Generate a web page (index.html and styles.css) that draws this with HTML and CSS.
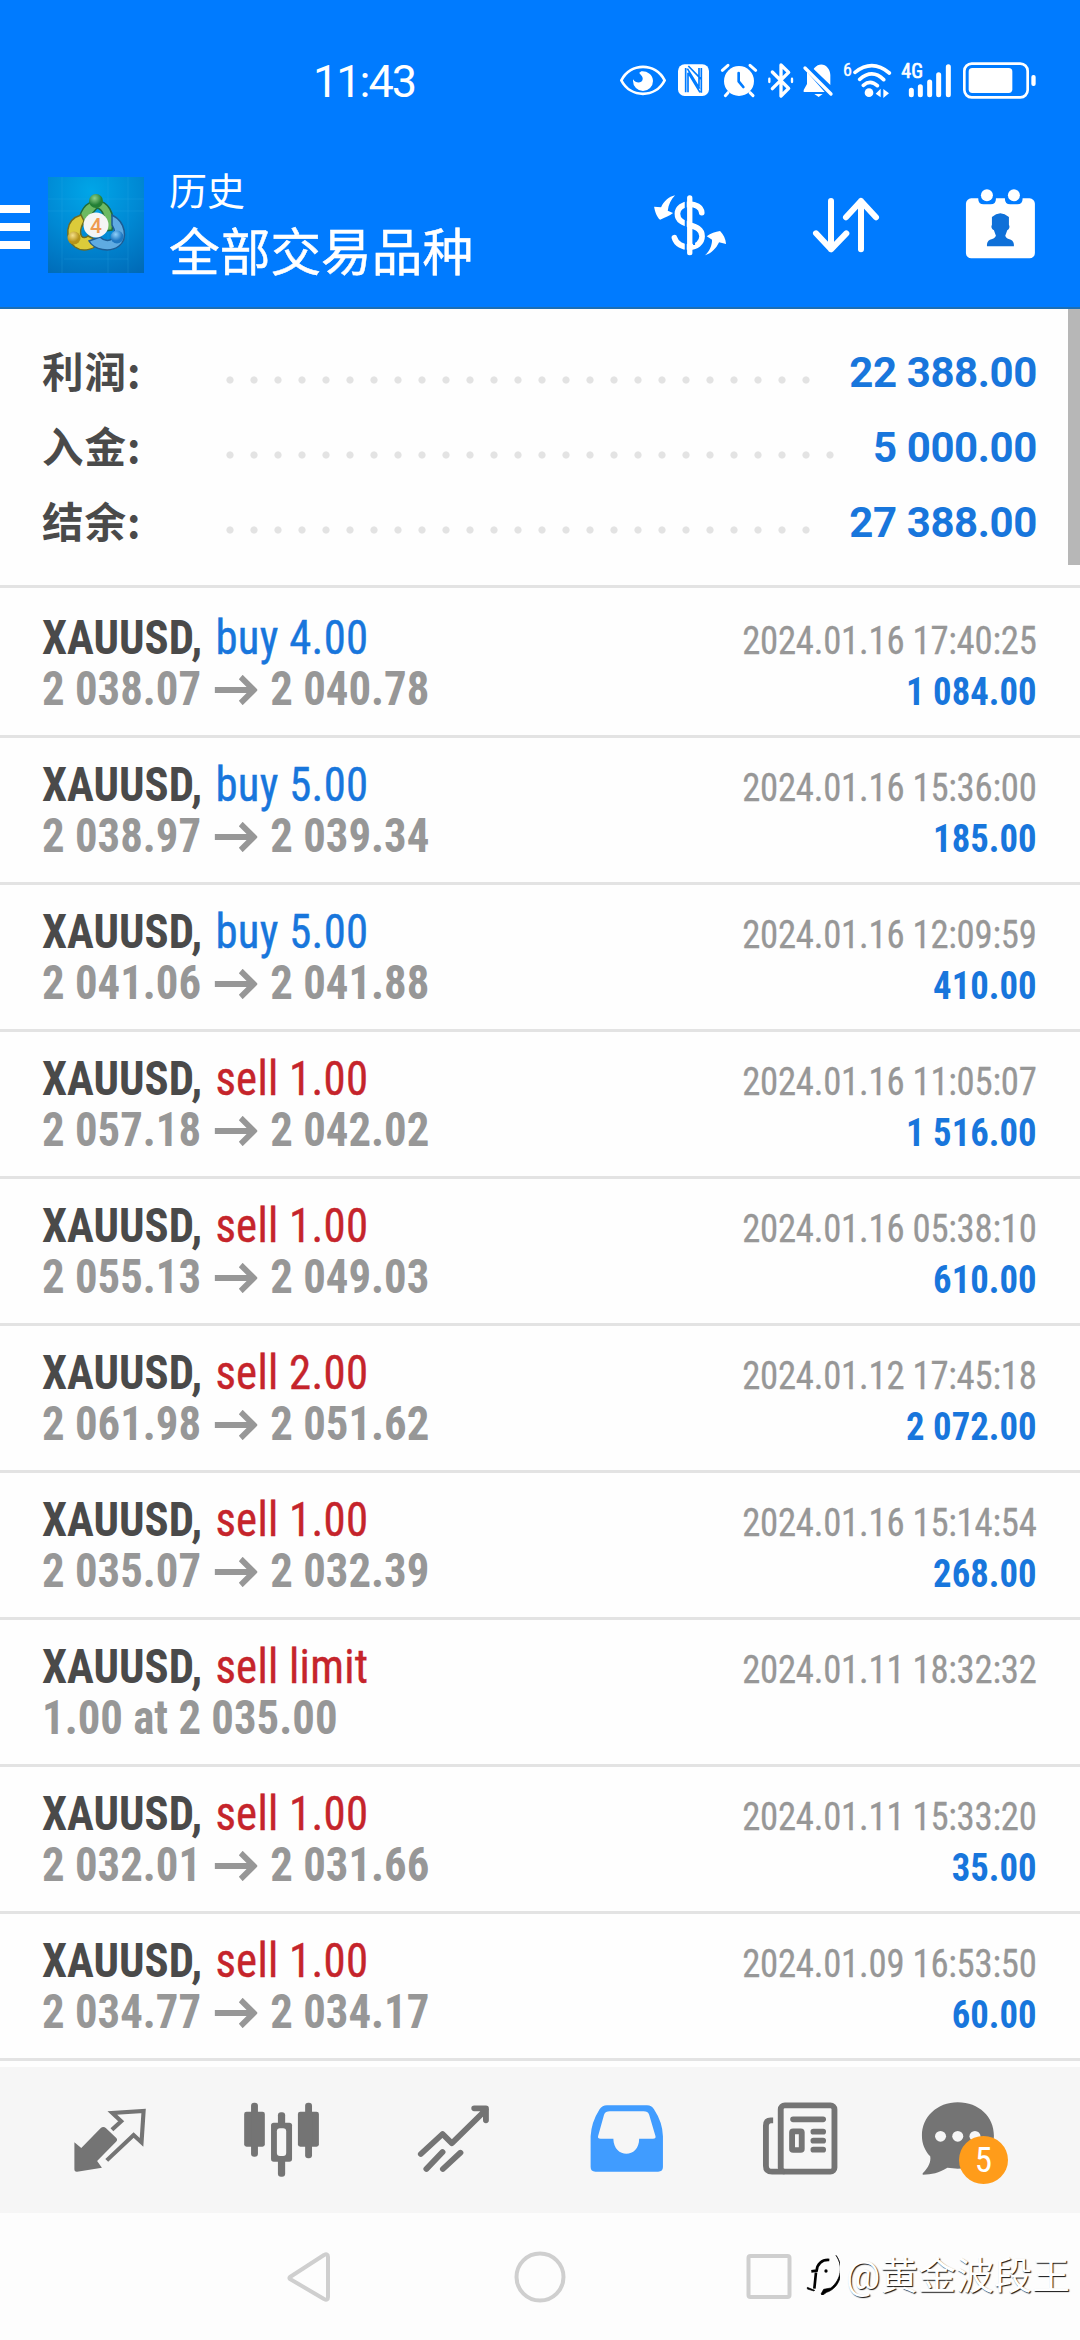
FILE: index.html
```
<!DOCTYPE html>
<html lang="zh-CN">
<head>
<meta charset="utf-8">
<title>历史</title>
<link rel="stylesheet" href="styles.css">
</head>
<body>
<header class="top">
  <div class="status">
    <div class="clock">11:43</div>
    <svg class="status-icons" viewBox="0 60 1440 120" fill="#fff" stroke="#fff" stroke-linecap="round" stroke-linejoin="round">
      <path d="M64 121C92 67 166 67 194 121C166 175 92 175 64 121Z" fill="none" stroke-width="8"/>
      <path d="M124 94C138 92 159 102 159 123A30 30 0 0 1 99 123L99 118C108 132 126 130 128 118C130 108 119 103 118 98Z" stroke="none"/>
      <rect x="234" y="73" width="93" height="95" rx="20" stroke="none"/>
      <path d="M257 84V157M264 98V157M262 86L299 146M265 78L304 118M304 84V158M297 84V140M264 98L300 157" fill="none" stroke="#007bff" stroke-width="5" stroke-linecap="butt"/>
      <circle cx="417" cy="123" r="45" stroke="none"/>
      <path d="M367 91L384 76M450 76L467 91M384 158L376 167M450 158L459 167" fill="none" stroke-width="9"/>
      <path d="M416 99V124L430 141" fill="none" stroke="#007bff" stroke-width="8"/>
      <path d="M517 96L566 145L543 168V75L566 97L517 146" fill="none" stroke-width="10"/>
      <path d="M508 116V126M576 116V126" stroke-width="7"/>
      <path d="M621 96V132L611 150V156H674ZM643 84C664 60 691 80 691 105V135L641 87ZM643 162H668L656 171Z" stroke="none"/>
      <path d="M615 84L693 162" stroke-width="10"/>
      <path d="M765 97Q817 56 868 99M779 118Q817 85 851 119M790 136Q811 118 832 137" fill="none" stroke-width="11"/>
      <circle cx="807" cy="158" r="13" stroke="none"/>
      <path d="M842 146V172L827 161ZM850 147V174L867 160Z" stroke="none"/>
      <text class="cond" x="729" y="108" font-size="54" stroke-width="1">6</text>
      <text class="cond" x="904" y="114" font-size="60" stroke-width="2">4G</text>
      <path d="M934 151V164M961 140V164M989 126V164M1016 104V164M1045 80V164" stroke-width="15"/>
      <rect x="1093" y="71" width="190" height="101" rx="22" fill="none" stroke-width="8"/>
      <rect x="1106" y="84" width="131" height="75" rx="11" stroke="none"/>
      <rect x="1294" y="105" width="13" height="33" rx="6" stroke="none"/>
    </svg>
  </div>
  <div class="bar">
    <div class="burger"><i></i><i></i><i></i></div>
    <svg class="logo" viewBox="0 0 96 96">
      <defs>
        <radialGradient id="sky" cx=".45" cy=".15" r="1"><stop offset="0" stop-color="#00a6e8"/><stop offset=".5" stop-color="#0089d4"/><stop offset="1" stop-color="#0069b6"/></radialGradient>
        <radialGradient id="gr" cx=".4" cy=".3"><stop offset="0" stop-color="#8fd08a"/><stop offset="1" stop-color="#237f35"/></radialGradient>
        <radialGradient id="ye" cx=".4" cy=".3"><stop offset="0" stop-color="#f5e08a"/><stop offset="1" stop-color="#b69318"/></radialGradient>
        <radialGradient id="bl" cx=".4" cy=".3"><stop offset="0" stop-color="#8fd0fa"/><stop offset="1" stop-color="#1f78c2"/></radialGradient>
      </defs>
      <rect width="96" height="96" fill="url(#sky)"/>
      <path d="M0 22H96M0 34H96M14 0V96M60 0V96M80 0V96M16 82H80" stroke="#32b2ea" stroke-opacity=".3" stroke-width=".7"/>
      <path d="M33 50C28 35 39 24 49 24S68 35 64 53L56 54C59 43 55 32 49 31Z" fill="#6dba62" stroke="#1f6b3a" stroke-width="1.5"/>
      <path d="M33 38C16 43 17 62 27 70C35 76 48 72 52 65L40 59C36 63 28 60 36 44Z" fill="#dccb3a" stroke="#6f6c22" stroke-width="1.5"/>
      <path d="M64 38C78 45 80 62 71 69C62 76 46 73 41 64L52 60C60 68 72 61 64 48Z" fill="#5fabe2" stroke="#1d5c94" stroke-width="1.5"/>
      <circle cx="48" cy="48" r="12.5" fill="#f5f5f5"/>
      <circle cx="48" cy="24" r="7" fill="url(#gr)"/>
      <circle cx="26" cy="61" r="6.5" fill="url(#ye)"/>
      <circle cx="69" cy="60" r="6.5" fill="url(#bl)"/>
      <text class="logo-num" x="48" y="55.5" text-anchor="middle">4</text>
    </svg>
    <div class="titles"><div class="sub">历史</div><div class="main">全部交易品种</div></div>
    <svg class="actions" viewBox="90 80 1170 220" fill="#fff" stroke="#fff" stroke-linecap="round" stroke-linejoin="round">
      <path d="M209 113V277" stroke-width="16"/>
      <path d="M245 157C243 123 172 122 172 160C172 204 246 184 246 228C246 269 174 272 163 232" fill="none" stroke-width="17"/>
      <path d="M197 116V275M222 143V182M222 220V254" stroke="#007bff" stroke-width="6" stroke-linecap="butt"/>
      <path d="M165 105C146 109 131 123 123 141L102 139C105 155 110 170 120 178C136 171 148 167 159 158L143 151C145 133 153 117 165 105ZM255 285C275 279 289 263 297 246L318 251C317 236 310 222 300 212C286 214 272 218 260 228L276 238C276 256 268 272 255 285Z" stroke="none"/>
      <path d="M633 122V267M588 219L633 267L679 219M723 267V122M678 171L723 122L768 171" fill="none" stroke-width="18"/>
      <rect x="1038" y="114" width="207" height="180" rx="16" stroke="none"/>
      <path d="M1075 108H1128V116Q1128 132 1112 132H1091Q1075 132 1075 116ZM1155 108H1208V116Q1208 132 1192 132H1171Q1155 132 1155 116Z" fill="#007bff" stroke="none"/>
      <circle cx="1101" cy="105" r="18" stroke="none"/><circle cx="1182" cy="105" r="18" stroke="none"/>
      <path d="M1116 170Q1141 148 1167 170V193Q1172 203 1162 210L1156 226Q1158 235 1173 238Q1183 243 1182 258H1101Q1100 243 1110 238Q1125 235 1128 226L1122 210Q1111 203 1116 193Z" fill="#0f70d8" stroke="none"/>
    </svg>
  </div>
</header>

<main class="list">
  <div class="scrollbar"></div>
  <section class="summary">
    <div class="sum"><span class="label">利润:</span><span class="dots"></span><span class="total">22 388.00</span></div>
    <div class="sum"><span class="label">入金:</span><span class="dots"></span><span class="total">5 000.00</span></div>
    <div class="sum"><span class="label">结余:</span><span class="dots"></span><span class="total">27 388.00</span></div>
  </section>
  <article class="deal first"><div class="left"><div class="name"><b>XAUUSD,</b> <span class="buy">buy 4.00</span></div><div class="price">2 038.07<svg class="arrow" viewBox="0 0 46 30"><path d="M0 15H43M28 2L42 15L28 28"/></svg>2 040.78</div></div><div class="right"><time>2024.01.16 17:40:25</time><div class="profit">1 084.00</div></div></article>
  <article class="deal"><div class="left"><div class="name"><b>XAUUSD,</b> <span class="buy">buy 5.00</span></div><div class="price">2 038.97<svg class="arrow" viewBox="0 0 46 30"><path d="M0 15H43M28 2L42 15L28 28"/></svg>2 039.34</div></div><div class="right"><time>2024.01.16 15:36:00</time><div class="profit">185.00</div></div></article>
  <article class="deal"><div class="left"><div class="name"><b>XAUUSD,</b> <span class="buy">buy 5.00</span></div><div class="price">2 041.06<svg class="arrow" viewBox="0 0 46 30"><path d="M0 15H43M28 2L42 15L28 28"/></svg>2 041.88</div></div><div class="right"><time>2024.01.16 12:09:59</time><div class="profit">410.00</div></div></article>
  <article class="deal"><div class="left"><div class="name"><b>XAUUSD,</b> <span class="sell">sell 1.00</span></div><div class="price">2 057.18<svg class="arrow" viewBox="0 0 46 30"><path d="M0 15H43M28 2L42 15L28 28"/></svg>2 042.02</div></div><div class="right"><time>2024.01.16 11:05:07</time><div class="profit">1 516.00</div></div></article>
  <article class="deal"><div class="left"><div class="name"><b>XAUUSD,</b> <span class="sell">sell 1.00</span></div><div class="price">2 055.13<svg class="arrow" viewBox="0 0 46 30"><path d="M0 15H43M28 2L42 15L28 28"/></svg>2 049.03</div></div><div class="right"><time>2024.01.16 05:38:10</time><div class="profit">610.00</div></div></article>
  <article class="deal"><div class="left"><div class="name"><b>XAUUSD,</b> <span class="sell">sell 2.00</span></div><div class="price">2 061.98<svg class="arrow" viewBox="0 0 46 30"><path d="M0 15H43M28 2L42 15L28 28"/></svg>2 051.62</div></div><div class="right"><time>2024.01.12 17:45:18</time><div class="profit">2 072.00</div></div></article>
  <article class="deal"><div class="left"><div class="name"><b>XAUUSD,</b> <span class="sell">sell 1.00</span></div><div class="price">2 035.07<svg class="arrow" viewBox="0 0 46 30"><path d="M0 15H43M28 2L42 15L28 28"/></svg>2 032.39</div></div><div class="right"><time>2024.01.16 15:14:54</time><div class="profit">268.00</div></div></article>
  <article class="deal"><div class="left"><div class="name"><b>XAUUSD,</b> <span class="sell">sell limit</span></div><div class="price">1.00 at 2 035.00</div></div><div class="right"><time>2024.01.11 18:32:32</time></div></article>
  <article class="deal"><div class="left"><div class="name"><b>XAUUSD,</b> <span class="sell">sell 1.00</span></div><div class="price">2 032.01<svg class="arrow" viewBox="0 0 46 30"><path d="M0 15H43M28 2L42 15L28 28"/></svg>2 031.66</div></div><div class="right"><time>2024.01.11 15:33:20</time><div class="profit">35.00</div></div></article>
  <article class="deal"><div class="left"><div class="name"><b>XAUUSD,</b> <span class="sell">sell 1.00</span></div><div class="price">2 034.77<svg class="arrow" viewBox="0 0 46 30"><path d="M0 15H43M28 2L42 15L28 28"/></svg>2 034.17</div></div><div class="right"><time>2024.01.09 16:53:50</time><div class="profit">60.00</div></div></article>
</main>

<nav class="tabs">
  <svg viewBox="0 82 522.7 438" preserveAspectRatio="none"><path fill="#747474" d="M216 308L236 325L292 266Q300 258 308 266L337 294Q343 300 337 306L282 364L296 384L224 396Q216 397 216 388Z"/><path fill="none" stroke="#747474" stroke-width="12" stroke-linejoin="miter" d="M325 270L352 245L326 220L417 214L411 308L388 286L310 362"/></svg>
  <svg viewBox="522.7 82 522.6 438" preserveAspectRatio="none" fill="#747474"><rect x="709" y="216" width="60" height="105" rx="7"/><rect x="729" y="189" width="20" height="162" rx="9"/><rect x="865" y="216" width="61" height="105" rx="7"/><rect x="886" y="189" width="20" height="167" rx="9"/><rect x="807" y="218" width="21" height="193" rx="9"/><rect x="787" y="249" width="61" height="117" rx="8"/><rect x="804" y="266" width="27" height="83" rx="9" fill="#f6f6f6"/></svg>
  <svg viewBox="1045.3 82 522.7 438" preserveAspectRatio="none" fill="none" stroke="#747474" stroke-width="17" stroke-linecap="round" stroke-linejoin="round"><path d="M1222 343L1285 283L1312 311L1411 210M1377 206H1411V242M1238 388L1285 337M1286 388L1337 339"/></svg>
  <svg viewBox="0 82 522.7 438" preserveAspectRatio="none"><path fill="#409cff" fill-rule="evenodd" d="M194 197H311Q324 197 331 209Q356 248 357 290V382Q357 396 343 396H161Q147 396 147 382V290Q149 248 173 209Q181 197 194 197ZM203 215Q190 215 186 225L169 288Q166 297 176 297H213C214 357 288 357 288 297H328Q338 297 335 288L317 225Q313 215 301 215Z"/></svg>
  <svg viewBox="522.7 82 522.6 438" preserveAspectRatio="none" fill="none" stroke="#747474" stroke-width="17"><rect x="699" y="197" width="156" height="199" rx="12"/><path d="M677 242H670Q656 242 656 258V378Q656 396 674 396H710" /><rect x="732" y="275" width="28" height="56" rx="3"/><path stroke-linecap="round" d="M735 239H822M794 276H822M794 303H822M794 330H822"/></svg>
  <div class="chat"><svg viewBox="1045.3 82 522.7 438" preserveAspectRatio="none"><path fill="#747474" d="M1213 188C1275 188 1318 232 1318 288C1318 345 1275 386 1213 387L1183 384C1158 400 1137 404 1112 405Q1109 404 1112 400C1128 384 1136 366 1133 350C1117 332 1109 312 1109 288C1109 232 1153 188 1213 188Z"/><g fill="#f6f6f6"><circle cx="1163" cy="290" r="16"/><circle cx="1213" cy="290" r="16"/><circle cx="1263" cy="290" r="16"/></g></svg><span class="badge">5</span></div>
</nav>

<footer class="sysnav">
  <svg viewBox="0 0 1080 127" fill="none" stroke="#cfcfcf" stroke-width="4" stroke-linejoin="round"><path d="M290 64L324 42Q328 40 328 44V84Q328 88 324 86L290 66Q289 65 290 64Z"/><circle cx="540" cy="64" r="23.5"/><rect x="748.5" y="43" width="41" height="41" rx="2"/>
  </svg>
  <div class="mark">
    <svg viewBox="0 0 120 150"><path fill="none" stroke="#000" stroke-width="8" d="M88 45C65 43 51 58 50 77L34 79M48 82L43 131"/><path d="M108 31C130 60 124 105 92 129L71 133L63 147L67 151L80 142C121 129 137 74 108 31ZM44 136L22 127V132L42 138Z" stroke="#000" stroke-width="2"/><circle cx="78" cy="78" r="5"/></svg>
    <span>@黄金波段王</span>
  </div>
</footer>
</body>
</html>
```
FILE: styles.css
```
* { box-sizing: border-box; }
body { margin: 0; width: 1080px; height: 2340px; overflow: hidden; display: flex; flex-direction: column; background: #fefefe; font-family: Roboto, "Noto Sans CJK SC", sans-serif; }
svg { display: block; flex: none; }

.top { height: 309px; background: #007bff; border-bottom: 2px solid #1c6fb5; color: #fff; flex: none; }
.status { height: 149px; display: flex; align-items: flex-start; padding-top: 60px; padding-left: 313px; }
.clock { width: 287px; font-size: 45px; line-height: 44px; letter-spacing: -2px; }
.status-icons { width: 480px; height: 40px; }
.cond { font-family: "Roboto Condensed", Roboto, sans-serif; }
.bar { display: flex; height: 158px; }
.burger { width: 48px; padding-top: 56px; display: flex; flex-direction: column; gap: 10px; }
.burger i { display: block; width: 30px; height: 8px; background: #fff; }
.logo { width: 96px; height: 96px; margin-top: 28px; }
.logo-num { font: 500 21px Roboto, sans-serif; fill: #ef9a50; }
.titles { width: 506px; padding-left: 25px; padding-top: 15px; }
.sub { font-size: 38px; line-height: 56px; }
.main { font-size: 50.7px; line-height: 68px; -webkit-text-stroke: .5px #fff; }
.actions { width: 390px; height: 73.3px; margin-top: 37.5px; }

.list { position: relative; height: 1758px; background: #fefefe; flex: none; }
.scrollbar { position: absolute; right: 0; top: 0; width: 12px; height: 256px; background: #b7b7b7; }
.summary { height: 276px; padding: 26px 43px 0 42px; }
.sum { display: flex; height: 75px; align-items: center; }
.label { width: 184px; padding-bottom: 5px; font-family: "Noto Sans CJK SC", sans-serif; font-size: 41.5px; line-height: 70px; letter-spacing: 1px; font-weight: 700; color: #4a4a4a; }
.dots { flex: 1; height: 8px; margin: 15px 25px 0 0; background: radial-gradient(circle at 4px 4px, #e3e3e3 3.2px, transparent 4px) 0 0 / 24px 8px repeat-x; }
.total { font-size: 42px; line-height: 75px; font-weight: 700; letter-spacing: -.4px; color: #1876dc; }

.deal { height: 147px; border-top: 3px solid #e3e3e3; display: flex; justify-content: space-between; padding: 21px 43px 0 42px; font-family: "Roboto Condensed", Roboto, sans-serif; }
.deal.first { height: 150px; padding-top: 24px; }
.deal:last-child { height: 150px; border-bottom: 3px solid #e3e3e3; }
.left { transform: scaleX(.933); transform-origin: 0 0; white-space: nowrap; }
.right { text-align: right; white-space: nowrap; transform: scaleX(.93); transform-origin: 100% 0; }
.name { font-size: 48px; line-height: 51px; color: #4a4a4a; }
.buy, .sell { margin-left: 3px; letter-spacing: .3px; -webkit-text-stroke: .4px; }
.buy { color: #1876dc; }
.sell { color: #c5242b; }
.price { display: flex; align-items: center; font-size: 48px; line-height: 51px; font-weight: 700; color: #979797; }
.arrow { width: 46px; height: 30px; margin: 2px 14px 0 14px; fill: none; stroke: #979797; stroke-width: 6; }
time { display: block; font-size: 39.5px; line-height: 57px; letter-spacing: -.25px; color: #979797; -webkit-text-stroke: .3px #979797; }
.profit { font-size: 39.5px; line-height: 45px; font-weight: 700; color: #1876dc; }

.tabs { height: 146px; background: #f6f6f6; display: flex; flex: none; }
.tabs svg { width: 180px; height: 146px; }
.chat { position: relative; }
.badge { position: absolute; left: 59px; top: 69px; width: 49px; height: 48px; border-radius: 50%; background: #ff9c1a; color: #fff; font: 35px/49px "Roboto Condensed", Roboto, sans-serif; text-align: center; }

.sysnav { position: relative; flex: 1; background: #fdfdfd; }
.mark { position: absolute; left: 800px; top: 32px; display: flex; color: #fff; font-size: 38px; line-height: 63px; text-shadow: 1px 1px 1px #111; white-space: nowrap; }
.mark svg { width: 40px; height: 50px; margin-right: 6px; }
```
